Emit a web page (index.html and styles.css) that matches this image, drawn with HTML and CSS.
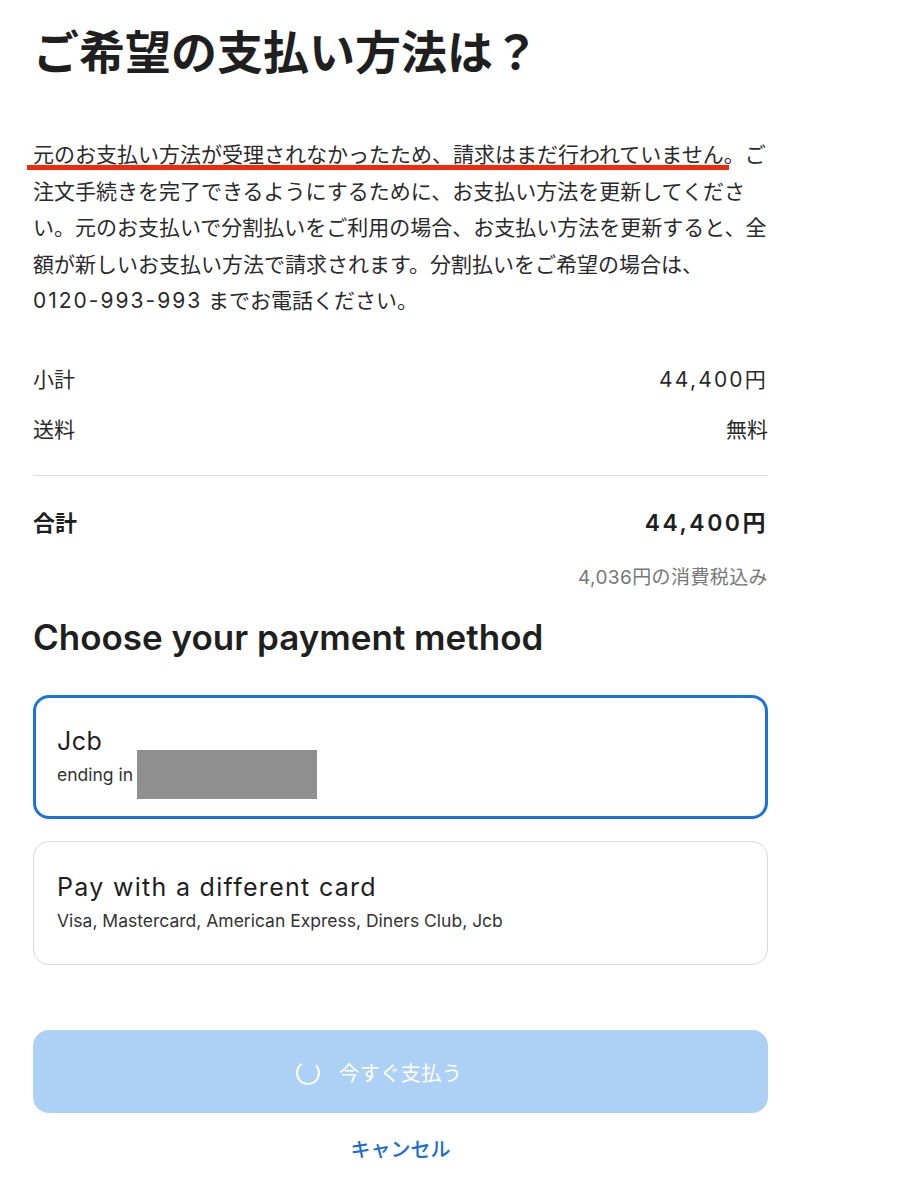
FILE: index.html
```html
<!DOCTYPE html>
<html lang="ja">
<head>
  <meta charset="UTF-8" />
  <meta name="viewport" content="width=device-width, initial-scale=1.0" />
  <title>ご希望の支払い方法は？</title>
  <link rel="stylesheet" href="styles.css">
</head>
<body>
  <div class="container">
    <h1 class="page-title">ご希望の支払い方法は？</h1>
    <p class="notice"><span class="marked">元のお支払い方法が受理されなかったため、請求はまだ行われていません</span>。ご注文手続きを完了できるようにするために、お支払い方法を更新してください。元のお支払いで分割払いをご利用の場合、お支払い方法を更新すると、全額が新しいお支払い方法で請求されます。分割払いをご希望の場合は、<span class="phone">0120-993-993</span> までお電話ください。</p>

    <div class="summary">
      <div class="summary-row">
        <span>小計</span>
        <span class="amount">44,400円</span>
      </div>
      <div class="summary-row shipping">
        <span>送料</span>
        <span>無料</span>
      </div>
      <div class="summary-row total">
        <span>合計</span>
        <span class="amount total-value">44,400円</span>
      </div>
      <div class="tax-note">4,036円の消費税込み</div>
    </div>

    <h2 class="section-title">Choose your payment method</h2>

    <div class="methods">
      <div class="method selected">
        <div class="method-name">Jcb</div>
        <div class="method-meta">
          <span>ending in</span>
          <span class="redacted"></span>
        </div>
      </div>
      <div class="method">
        <div class="method-name wide">Pay with a different card</div>
        <div class="method-sub">Visa, Mastercard, American Express, Diners Club, Jcb</div>
      </div>
    </div>

    <button class="pay-button" disabled>
      <span class="pay-label">
        <svg class="spinner" width="26" height="26" viewBox="0 0 26 26">
          <circle cx="13" cy="13" r="11" fill="none" stroke="#fff" stroke-width="2" stroke-linecap="round" stroke-dasharray="52 17" transform="rotate(-40 13 13)" />
        </svg>
        今すぐ支払う
      </span>
    </button>
    <a class="cancel-link" href="#">キャンセル</a>
  </div>
</body>
</html>
```

FILE: styles.css
```css
* { box-sizing: border-box; }
body {
  margin: 0;
  font-family: Inter, "Noto Sans CJK JP", sans-serif;
  background: #ffffff;
  color: #222;
}
.container {
  width: 735px;
  margin-left: 33px;
  padding-top: 23px;
  display: flex;
  flex-direction: column;
}
.page-title {
  margin: 0;
  font-size: 46px;
  line-height: 58px;
  font-weight: 700;
  color: #1f1f1f;
}
.notice {
  margin: 56px 0 0;
  font-size: 21px;
  line-height: 36.5px;
  color: #2a2a2a;
}
.marked {
  position: relative;
}
.marked::after {
  content: "";
  position: absolute;
  left: -6px;
  right: -5px;
  bottom: -3px;
  height: 5px;
  background: #f22a0a;
}
.phone {
  white-space: nowrap;
  letter-spacing: 2px;
}
.summary {
  margin-top: 35px;
  display: flex;
  flex-direction: column;
}
.summary-row {
  display: flex;
  justify-content: space-between;
  align-items: center;
  height: 50px;
  font-size: 21px;
  line-height: 30px;
  color: #2a2a2a;
}
.summary-row.shipping {
  height: 71.5px;
  align-items: flex-start;
  padding-top: 10px;
  border-bottom: 1px solid #dcdcdc;
}
.amount {
  letter-spacing: 2.2px;
}
.summary-row.total {
  margin-top: 29px;
  height: 36px;
  font-size: 22px;
  font-weight: 600;
  color: #1f1f1f;
}
.total-value {
  font-size: 23px;
  letter-spacing: 2.5px;
}
.tax-note {
  margin-top: 25px;
  align-self: flex-end;
  font-size: 19px;
  line-height: 24px;
  letter-spacing: 0.4px;
  color: #777;
}
.section-title {
  margin: 25px 0 0;
  font-size: 35px;
  line-height: 44px;
  font-weight: 600;
  color: #1f1f1f;
}
.methods {
  margin-top: 36px;
  display: flex;
  flex-direction: column;
  gap: 22px;
}
.method {
  height: 124px;
  border: 1px solid #d9d9d9;
  border-radius: 16px;
  padding: 30px 23px 0;
}
.method.selected {
  border: 3px solid #1a73e0;
  padding: 33px 21px 0;
}
.method-name {
  font-size: 25px;
  line-height: 20px;
  letter-spacing: 0.5px;
  color: #1f1f1f;
}
.method-name.wide {
  line-height: 30px;
  letter-spacing: 1.3px;
}
.method-meta {
  margin-top: -1px;
  display: flex;
  align-items: center;
  gap: 4px;
  font-size: 17.5px;
  color: #333;
}
.redacted {
  width: 180px;
  height: 49px;
  background: #8f8f8f;
}
.method-sub {
  margin-top: 8px;
  font-size: 17.5px;
  line-height: 22px;
  color: #333;
}
.pay-button {
  margin-top: 65px;
  height: 83px;
  border: none;
  border-radius: 16px;
  background: #add1f5;
  color: #fff;
  font-family: inherit;
  font-size: 20.5px;
  display: flex;
  align-items: center;
  justify-content: center;
}
.pay-label {
  position: relative;
}
.spinner {
  position: absolute;
  right: calc(100% + 18px);
  top: 50%;
  margin-top: -12px;
}
.cancel-link {
  margin-top: 22px;
  align-self: center;
  font-size: 20px;
  line-height: 30px;
  font-weight: 500;
  color: #1a6dd0;
  text-decoration: none;
}
```
